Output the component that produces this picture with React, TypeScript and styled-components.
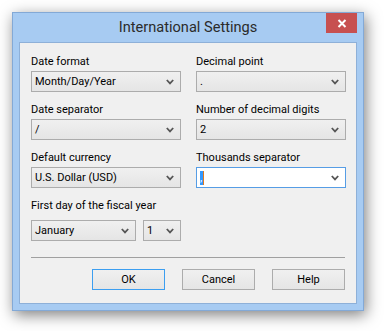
import React from "react";
import styled, { createGlobalStyle } from "styled-components";

const GlobalStyle = createGlobalStyle`
  html, body { margin: 0; padding: 0; background: #ffffff; }
  body { font-family: Roboto, "Noto Sans", sans-serif; }
  * { box-sizing: border-box; }
`;

const Page = styled.div`
  padding: 12px 0 0 12px;
  width: 384px;
  height: 331px;
`;

const Window = styled.div`
  width: 352px;
  height: 299px;
  background: #a7cbf2;
  border: 1px solid #83a9d6;
  padding: 0 6px 6px 6px;
  display: flex;
  flex-direction: column;
  box-shadow: 2px 4px 14px rgba(0, 0, 0, 0.5);
`;

const TitleBar = styled.div`
  height: 29px;
  display: grid;
  grid-template-columns: 1fr auto 1fr;
  align-items: start;
`;

const Title = styled.div`
  grid-column: 2;
  font-size: 14.6px;
  line-height: 29px;
  color: #2b2b2b;
  white-space: nowrap;
`;

const CloseButton = styled.div`
  grid-column: 3;
  justify-self: end;
  width: 31px;
  height: 20px;
  background: #c75050;
  display: flex;
  align-items: center;
  justify-content: center;
`;

const Client = styled.div`
  flex: 1;
  background: #f0f0f0;
  border: 1px solid #8eb0d8;
  padding: 11px 10px 0 11px;
  display: flex;
  flex-direction: column;
`;

const Grid = styled.div`
  display: grid;
  grid-template-columns: 150px 150px;
  column-gap: 15px;
  row-gap: 10px;
`;

const Field = styled.div<{ $gap?: number }>`
  display: flex;
  flex-direction: column;
  gap: ${(p) => p.$gap ?? 2}px;
`;

const Label = styled.div`
  font-size: 11px;
  line-height: 15px;
  color: #000;
  white-space: nowrap;
`;

const Combo = styled.div<{ $focused?: boolean; $width?: number }>`
  width: ${(p) => p.$width ?? 150}px;
  height: 21px;
  border: 1px solid ${(p) => (p.$focused ? "#569de5" : "#acacac")};
  background: ${(p) => (p.$focused ? "#ffffff" : "linear-gradient(#f0f0f0, #e5e5e5)")};
  display: flex;
  align-items: center;
  padding: 0 6px 0 3px;
  font-size: 11px;
  color: #000;
`;

const ComboText = styled.div`
  flex: 1;
  white-space: nowrap;
  line-height: 19px;
`;

const Highlight = styled.span`
  display: inline-block;
  background: #3399ff;
  color: #fff;
  width: 4px;
  height: 14px;
  line-height: 14px;
  vertical-align: middle;
  border-right: 1px solid #e07a1f;
  font-size: 11px;
  overflow: hidden;
`;

const Row = styled.div`
  display: flex;
  gap: 7px;
`;

const Separator = styled.div`
  margin-top: 16px;
  width: 314px;
  height: 1px;
  background: #a0a0a0;
`;

const Buttons = styled.div`
  margin-top: 11px;
  width: 314px;
  display: flex;
  justify-content: flex-end;
  gap: 17px;
`;

const Button = styled.div<{ $default?: boolean }>`
  width: 73px;
  height: 21px;
  border: 1px solid ${(p) => (p.$default ? "#3c9ef0" : "#acacac")};
  background: linear-gradient(#f0f0f0, #e5e5e5);
  font-size: 11px;
  line-height: 19px;
  text-align: center;
  color: #000;
`;

const Chevron = () => (
  <svg width="8" height="6" viewBox="0 0 8 6">
    <path d="M0.8 1 L4 4.4 L7.2 1" fill="none" stroke="#555" strokeWidth="1.8" />
  </svg>
);

const ComboBox: React.FC<{ value: React.ReactNode; focused?: boolean; width?: number }> = ({
  value,
  focused,
  width,
}) => (
  <Combo $focused={focused} $width={width}>
    <ComboText>{value}</ComboText>
    <Chevron />
  </Combo>
);

export default function App() {
  return (
    <>
      <GlobalStyle />
      <Page>
        <Window>
          <TitleBar>
            <Title>International Settings</Title>
            <CloseButton>
              <svg width="10" height="9" viewBox="0 0 10 9">
                <path d="M1.5 1 L8.5 8 M8.5 1 L1.5 8" stroke="#fff" strokeWidth="2" />
              </svg>
            </CloseButton>
          </TitleBar>
          <Client>
            <Grid>
              <Field>
                <Label>Date format</Label>
                <ComboBox value="Month/Day/Year" />
              </Field>
              <Field>
                <Label>Decimal point</Label>
                <ComboBox value="." />
              </Field>
              <Field>
                <Label>Date separator</Label>
                <ComboBox value="/" />
              </Field>
              <Field>
                <Label>Number of decimal digits</Label>
                <ComboBox value="2" />
              </Field>
              <Field>
                <Label>Default currency</Label>
                <ComboBox value="U.S. Dollar (USD)" />
              </Field>
              <Field>
                <Label>Thousands separator</Label>
                <ComboBox focused value={<Highlight>,</Highlight>} />
              </Field>
              <Field $gap={7}>
                <Label>First day of the fiscal year</Label>
                <Row>
                  <ComboBox width={105} value="January" />
                  <ComboBox width={38} value="1" />
                </Row>
              </Field>
            </Grid>
            <Separator />
            <Buttons>
              <Button $default>OK</Button>
              <Button>Cancel</Button>
              <Button>Help</Button>
            </Buttons>
          </Client>
        </Window>
      </Page>
    </>
  );
}
